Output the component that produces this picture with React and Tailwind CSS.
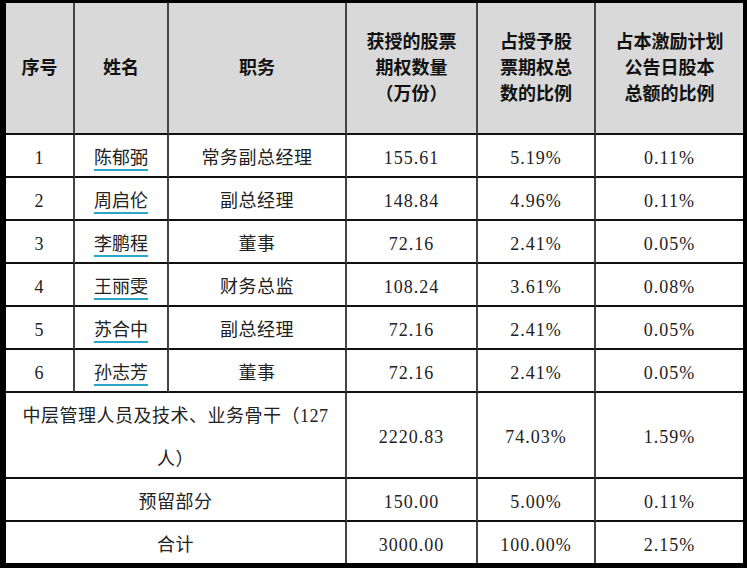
import React from 'react';

// Stock option allocation table
const rows = [
    { no: '1', name: '陈郁弼', title: '常务副总经理', qty: '155.61', pct: '5.19%', total: '0.11%' },
    { no: '2', name: '周启伦', title: '副总经理', qty: '148.84', pct: '4.96%', total: '0.11%' },
    { no: '3', name: '李鹏程', title: '董事', qty: '72.16', pct: '2.41%', total: '0.05%' },
    { no: '4', name: '王丽雯', title: '财务总监', qty: '108.24', pct: '3.61%', total: '0.08%' },
    { no: '5', name: '苏合中', title: '副总经理', qty: '72.16', pct: '2.41%', total: '0.05%' },
    { no: '6', name: '孙志芳', title: '董事', qty: '72.16', pct: '2.41%', total: '0.05%' },
];

const head = 'flex items-center justify-center text-center bg-[#d9d9d9] font-[\'Noto_Sans_CJK_SC\',sans-serif] font-bold text-[#111] border-b-2 border-b-[#111]';
const cell = 'flex items-center justify-center text-center pt-[5px] border-b-2 border-r-2 border-b-[#111] border-r-[#454545]';
const last = 'flex items-center justify-center text-center pt-[5px] border-b-2 border-b-[#111]';
const num = 'tracking-[1px]';

const App = () => {
    return (
        <div className="w-[747px] h-[568px] bg-white border-l-[6px] border-t-[3px] border-r-[4px] border-b-[5px] border-black font-['Liberation_Serif','Noto_Sans_CJK_SC',serif] text-[18px] text-[#222]">
            <div className="grid grid-cols-[69px_94px_178px_131px_118px_147px] grid-rows-[132px_43px_43px_43px_43px_43px_43px_86px_43px_41px]">
                {/* Header */}
                <div className={`${head} border-r-2 border-r-[#454545]`}>序号</div>
                <div className={`${head} border-r-2 border-r-[#454545]`}>姓名</div>
                <div className={`${head} border-r-2 border-r-[#454545]`}>职务</div>
                <div className={`${head} border-r-2 border-r-[#454545] leading-[26px]`}>
                    获授的股票<br />期权数量<br />（万份）
                </div>
                <div className={`${head} border-r-2 border-r-[#454545] leading-[26px]`}>
                    占授予股<br />票期权总<br />数的比例
                </div>
                <div className={`${head} leading-[26px]`}>
                    占本激励计划<br />公告日股本<br />总额的比例
                </div>

                {rows.map((r) => (
                    <React.Fragment key={r.no}>
                        <div className={`${cell} ${num}`}>{r.no}</div>
                        <div className={cell}>
                            <span className="underline decoration-2 decoration-[#2aa5c8] underline-offset-[5px]">{r.name}</span>
                        </div>
                        <div className={`${cell} tracking-[0.5px]`}>{r.title}</div>
                        <div className={`${cell} ${num}`}>{r.qty}</div>
                        <div className={`${cell} ${num}`}>{r.pct}</div>
                        <div className={`${last} ${num}`}>{r.total}</div>
                    </React.Fragment>
                ))}

                {/* Middle management */}
                <div className={`${cell} col-span-3 leading-[43px] tracking-[0.5px]`}>
                    <span>中层管理人员及技术、业务骨干（127<br />人）</span>
                </div>
                <div className={`${cell} ${num}`}>2220.83</div>
                <div className={`${cell} ${num}`}>74.03%</div>
                <div className={`${last} ${num}`}>1.59%</div>

                {/* Reserved */}
                <div className={`${cell} col-span-3 tracking-[0.5px]`}>预留部分</div>
                <div className={`${cell} ${num}`}>150.00</div>
                <div className={`${cell} ${num}`}>5.00%</div>
                <div className={`${last} ${num}`}>0.11%</div>

                {/* Total */}
                <div className="col-span-3 flex items-center justify-center pt-[5px] border-r-2 border-r-[#454545] tracking-[0.5px]">合计</div>
                <div className={`flex items-center justify-center pt-[5px] border-r-2 border-r-[#454545] ${num}`}>3000.00</div>
                <div className={`flex items-center justify-center pt-[5px] border-r-2 border-r-[#454545] ${num}`}>100.00%</div>
                <div className={`flex items-center justify-center pt-[5px] ${num}`}>2.15%</div>
            </div>
        </div>
    );
};

export default App;
